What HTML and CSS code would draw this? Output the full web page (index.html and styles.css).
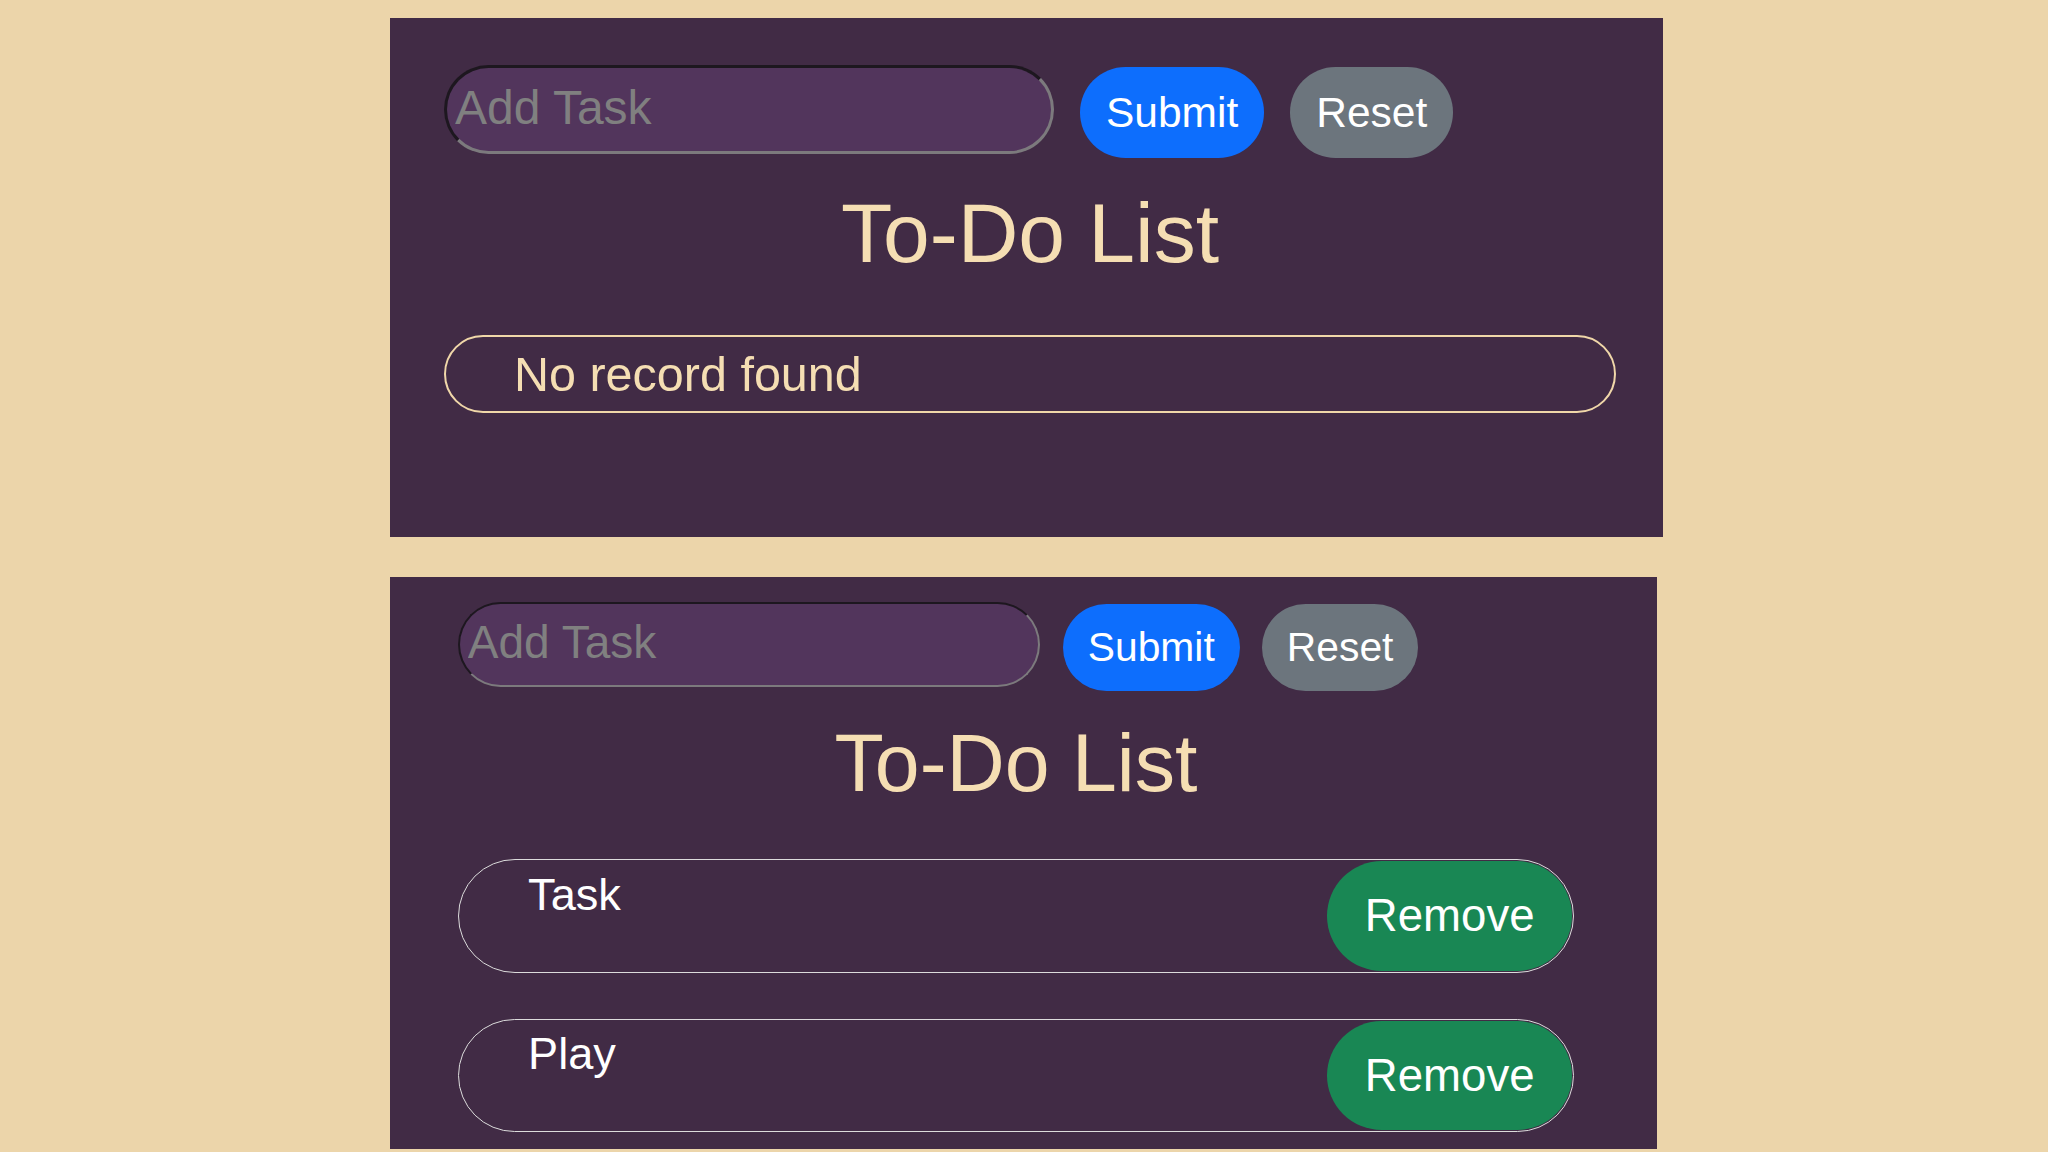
FILE: index.html
```html
<!DOCTYPE html>
<html lang="en">
<head>
<meta charset="utf-8">
<title>To-Do List</title>
<link rel="stylesheet" href="styles.css">
</head>
<body>
<main class="stage">
  <section class="panel panel--empty">
    <div class="app">
      <form class="task-form">
        <input class="task-input" type="text" placeholder="Add Task">
        <button class="btn btn--primary" type="button">Submit</button>
        <button class="btn btn--secondary" type="reset">Reset</button>
      </form>
      <h1 class="title">To-Do List</h1>
      <ul class="list">
        <li class="empty">No record found</li>
      </ul>
    </div>
  </section>

  <section class="panel panel--filled">
    <div class="app app--compact">
      <form class="task-form">
        <input class="task-input" type="text" placeholder="Add Task">
        <button class="btn btn--primary" type="button">Submit</button>
        <button class="btn btn--secondary" type="reset">Reset</button>
      </form>
      <h1 class="title">To-Do List</h1>
      <ul class="list list--tasks">
        <li class="task"><span class="task__name">Task</span><button class="btn btn--success" type="button">Remove</button></li>
        <li class="task"><span class="task__name">Play</span><button class="btn btn--success" type="button">Remove</button></li>
      </ul>
    </div>
  </section>
</main>
</body>
</html>
```

FILE: styles.css
```css
* {
  box-sizing: border-box;
}

html, body {
  margin: 0;
  padding: 0;
}

body {
  background: #ecd5aa;
  font-family: "Liberation Sans", Arial, sans-serif;
  overflow: hidden;
}

.stage {
  display: flex;
  flex-direction: column;
  align-items: flex-start;
  gap: 40px;
  padding: 18px 0 0 390px;
}

.panel {
  background: #412b45;
}

.panel--empty {
  width: 1273px;
  padding: 47px 47px 124px 54px;
}

.panel--filled {
  width: 1267px;
  padding: 25px 83px 17px 68px;
}

.app--compact {
  zoom: 0.96;
}

/* form row */
.task-form {
  display: flex;
  align-items: flex-start;
  gap: 26px;
  margin: 0;
}

.app--compact .task-form {
  gap: 24px;
}

.task-input {
  flex: none;
  width: 610px;
  height: 89px;
  margin: 0;
  padding: 0 8px 5px;
  border-width: 3px;
  border-style: solid;
  border-color: #1d171f #7c7a7d #7c7a7d #1d171f;
  border-radius: 45px;
  background: #52355c;
  color: #ffffff;
  font-family: inherit;
  font-size: 48px;
  outline: none;
}

.app--compact .task-input {
  width: 606px;
}

.task-input::placeholder {
  color: #808080;
}

.btn {
  flex: none;
  margin: 0;
  border: 1px solid transparent;
  border-radius: 999px;
  color: #ffffff;
  font-family: inherit;
  font-weight: 400;
  cursor: pointer;
}

.task-form .btn {
  margin-top: 2px;
  padding: 13px 25px;
  font-size: 42.5px;
  line-height: 63px;
}

.app--compact .btn--secondary {
  margin-left: -1px;
}

.btn--primary {
  background: #0d6efd;
}

.btn--secondary {
  background: #6c757d;
}

.btn--success {
  background: #198754;
  padding: 20px 38px;
  font-size: 47.5px;
  line-height: 72px;
}

/* heading */
.title {
  margin: 27px 0 0;
  color: #f5deb3;
  font-size: 84px;
  font-weight: 400;
  line-height: normal;
  text-align: center;
}

/* list */
.list {
  list-style: none;
  margin: 53px 0 0;
  padding: 0;
  display: flex;
  flex-direction: column;
  gap: 48px;
}

.list--tasks {
  margin-top: 51px;
}

.empty {
  border: 2px solid #f0d7a9;
  border-radius: 40px;
  padding: 9px 0 9px 68px;
  color: #f5deb3;
  font-size: 48.5px;
  line-height: normal;
}

.task {
  display: flex;
  justify-content: space-between;
  align-items: flex-start;
  padding: 1px;
  border: 2px solid #dcdcdc;
  border-radius: 60px;
}

.task__name {
  padding: 8px 0 0 71px;
  color: #ffffff;
  font-size: 47px;
  line-height: normal;
}
```
